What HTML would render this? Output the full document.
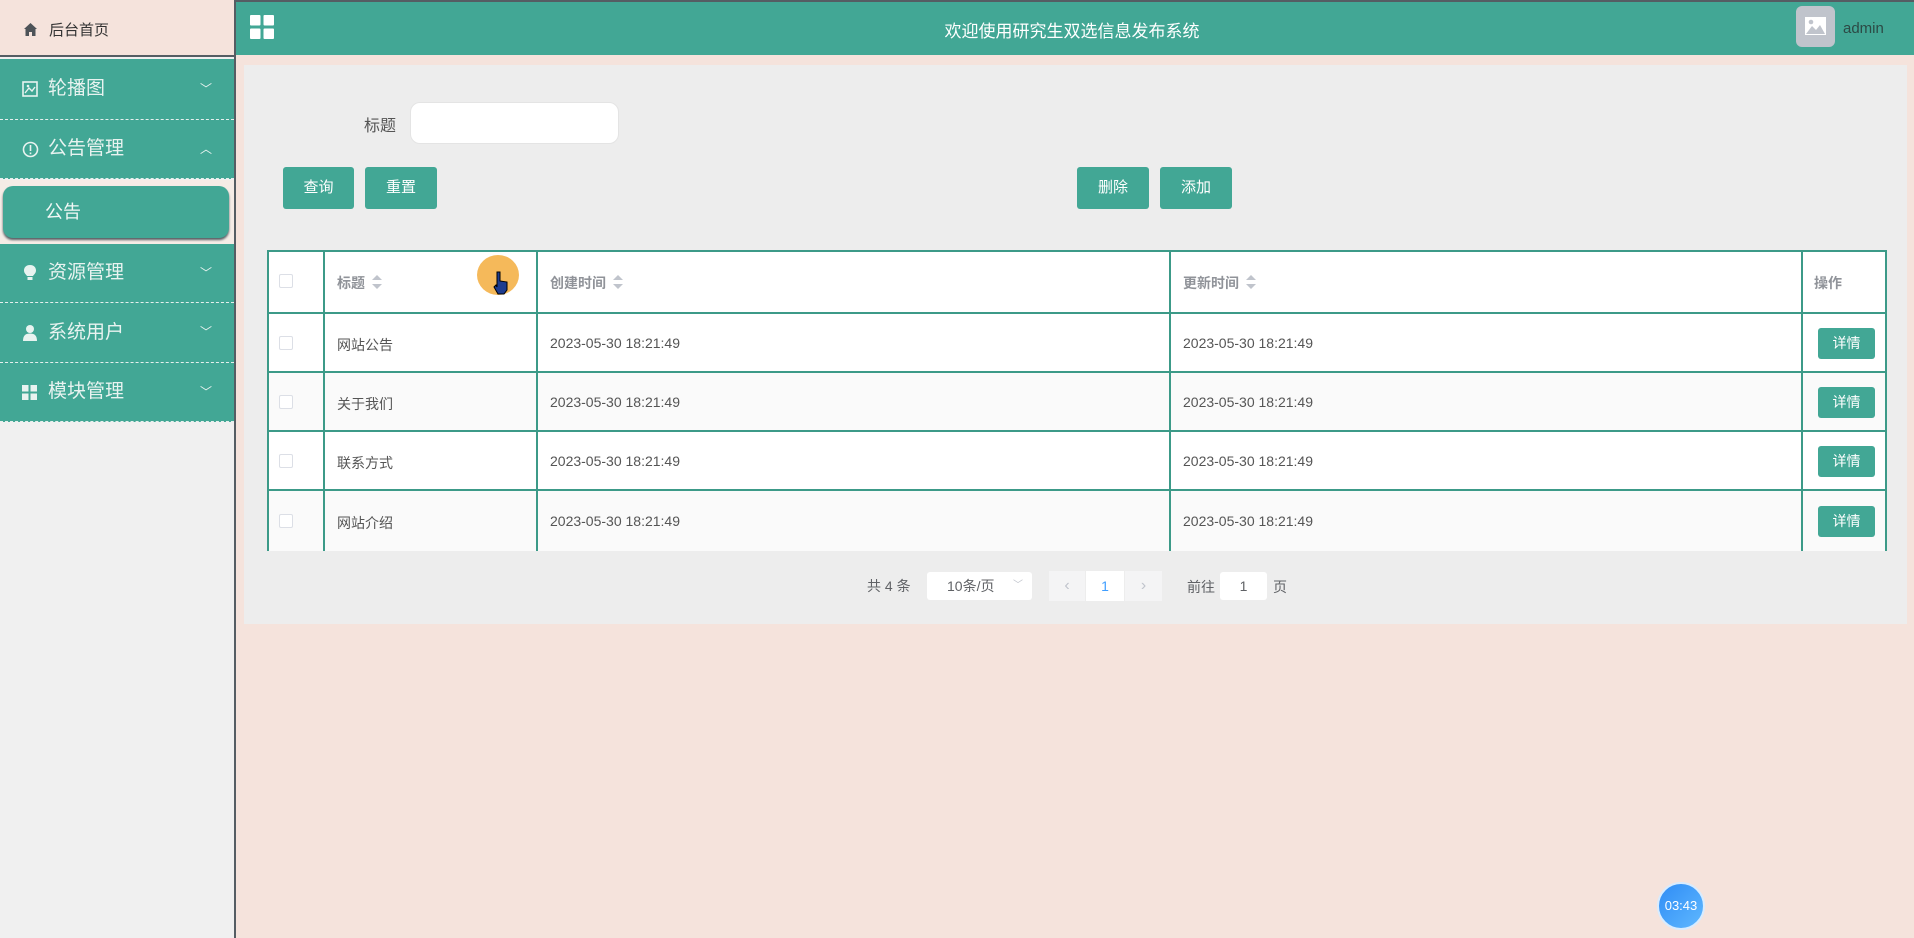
<!DOCTYPE html>
<html><head><meta charset="utf-8"><style>
*{margin:0;padding:0;box-sizing:border-box}
body{width:1914px;height:938px;background:#f5e3dc;font-family:"Liberation Sans","Noto Sans CJK SC",sans-serif;position:relative;overflow:hidden}
.a{position:absolute}
.side{left:0;top:0;width:236px;height:938px;background:#f0f0f0;border-right:2px solid #555d63}
.home{left:0;top:0;width:234px;height:57px;background:#f5e3dc;border-bottom:2px solid #555d63}
.mi{left:0;width:234px;background:#42a795;color:#e8f3f0;font-size:19px;border-bottom:1px dashed #e6f0ee}
.mi span.t{position:absolute;left:48px}
.mi .ic{position:absolute;left:22px}
.mi .ar{position:absolute;right:22px;font-size:12px}
.hdr{left:236px;top:0;width:1678px;height:55px;background:#42a795;border-top:2px solid #555d63}
.btn{background:#42a795;color:#fff;font-size:15px;text-align:center;border-radius:3px;height:42px;line-height:42px;top:167px}
.cb{position:absolute;left:12px;width:14px;height:14px;border:1px solid #dcdfe6;background:#fff;border-radius:2px}
.det{position:absolute;width:57px;height:31px;line-height:31px;text-align:center;background:#42a795;color:#fff;font-size:14px;border-radius:3px}
.th{position:absolute;top:23px;font-size:14px;color:#909399;font-weight:bold}
.sort{display:inline-block;vertical-align:middle;margin-left:7px;width:10px;height:16px;position:relative;top:-1px}
.sort:before{content:"";position:absolute;top:0;left:0;border:5px solid transparent;border-bottom-color:#c0c4cc;border-top-width:0}
.sort:after{content:"";position:absolute;bottom:2px;left:0;border:5px solid transparent;border-top-color:#c0c4cc;border-bottom-width:0}
.ln{position:absolute;background:#3c9a88}
</style></head><body>
<div class="a side"></div>
<div class="a home"><svg class="a" style="left:23px;top:22px" width="15" height="15" viewBox="0 0 15 15"><path d="M7.5 1 L14 7 L12.5 7 L12.5 14 L9 14 L9 10 L6 10 L6 14 L2.5 14 L2.5 7 L1 7Z" fill="#4d5358"/></svg><span class="a" style="left:49px;top:19px;font-size:15px;color:#333">后台首页</span></div>
<div class="a mi" style="top:59px;height:61px;line-height:60px"><svg class="ic" style="top:22px" width="16" height="16" viewBox="0 0 16 16"><rect x="1" y="1" width="14" height="14" fill="none" stroke="#e8f3f0" stroke-width="1.6"/><path d="M3 12 L7 7 L10 10 L13 6" fill="none" stroke="#e8f3f0" stroke-width="1.4"/><circle cx="6" cy="5" r="1.3" fill="#e8f3f0"/></svg><span class="t">轮播图</span><span class="ar">﹀</span></div>
<div class="a mi" style="top:120px;height:59px;line-height:58px"><svg class="ic" style="top:21px" width="17" height="17" viewBox="0 0 17 17"><circle cx="8.5" cy="8.5" r="7" fill="none" stroke="#e8f3f0" stroke-width="1.6"/><rect x="7.7" y="4" width="1.6" height="6" fill="#e8f3f0"/><rect x="7.7" y="11.5" width="1.6" height="1.7" fill="#e8f3f0"/></svg><span class="t">公告管理</span><span class="ar">︿</span></div>
<div class="a" style="left:0;top:180px;width:234px;height:64px;background:#f5ece6"></div>
<div class="a" style="left:3px;top:186px;width:226px;height:52px;background:#42a795;border-radius:10px;box-shadow:0 2px 2px #555d63;font-size:18px;line-height:52px;padding-left:42px;color:#f2f8f6">公告</div>
<div class="a mi" style="top:244px;height:59px;line-height:58px"><svg class="ic" style="top:20px" width="16" height="18" viewBox="0 0 16 18"><path d="M8 1 C3.5 1 2 4 2 6.5 C2 9 4 10.5 5 12 L11 12 C12 10.5 14 9 14 6.5 C14 4 12.5 1 8 1Z" fill="#e8f3f0"/><rect x="5.5" y="13" width="5" height="3" fill="#e8f3f0"/></svg><span class="t">资源管理</span><span class="ar">﹀</span></div>
<div class="a mi" style="top:303px;height:60px;line-height:59px"><svg class="ic" style="top:21px" width="16" height="17" viewBox="0 0 16 17"><circle cx="8" cy="5" r="4" fill="#e8f3f0"/><path d="M1 17 C1 11 4 9.5 8 9.5 C12 9.5 15 11 15 17Z" fill="#e8f3f0"/></svg><span class="t">系统用户</span><span class="ar">﹀</span></div>
<div class="a mi" style="top:363px;height:59px;line-height:58px"><svg class="ic" style="top:22px" width="15" height="15" viewBox="0 0 15 15"><rect x="0" y="0" width="6.5" height="6.5" fill="#e8f3f0"/><rect x="8.5" y="0" width="6.5" height="6.5" fill="#e8f3f0"/><rect x="0" y="8.5" width="6.5" height="6.5" fill="#e8f3f0"/><rect x="8.5" y="8.5" width="6.5" height="6.5" fill="#e8f3f0"/></svg><span class="t">模块管理</span><span class="ar">﹀</span></div>

<div class="a hdr"><svg class="a" style="left:14px;top:13px" width="24" height="24" viewBox="0 0 24 24"><rect x="0" y="0" width="10.5" height="10.5" rx="1" fill="#fff"/><rect x="13.5" y="0" width="10.5" height="10.5" rx="1" fill="#fff"/><rect x="0" y="13.5" width="10.5" height="10.5" rx="1" fill="#fff"/><rect x="13.5" y="13.5" width="10.5" height="10.5" rx="1" fill="#fff"/></svg>
<div class="a" style="left:0;width:1678px;top:15px;text-align:center;font-size:17px;color:#fff;padding-right:6px">欢迎使用研究生双选信息发布系统</div>
<div class="a" style="left:1560px;top:4px;width:39px;height:41px;background:#c0c4cc;border-radius:6px"><svg class="a" style="left:9px;top:11px" width="21" height="18" viewBox="0 0 21 18"><rect width="21" height="18" fill="#fff"/><path d="M1 17 L7 9 L11 13 L15 8 L20 17Z" fill="#c0c4cc"/><circle cx="6" cy="5" r="2.3" fill="#c0c4cc"/></svg></div>
<div class="a" style="left:1607px;top:18px;font-size:15px;color:#2c4a45">admin</div></div>

<div class="a" style="left:244px;top:65px;width:1663px;height:559px;background:#ededed"></div>
<div class="a" style="left:364px;top:112px;font-size:16px;color:#555">标题</div>
<div class="a" style="left:410px;top:102px;width:209px;height:42px;background:#fff;border:1px solid #e4e4e4;border-radius:10px"></div>
<div class="a btn" style="left:283px;width:71px">查询</div>
<div class="a btn" style="left:365px;width:72px">重置</div>
<div class="a btn" style="left:1077px;width:72px">删除</div>
<div class="a btn" style="left:1160px;width:72px">添加</div>

<div class="a" style="left:267px;top:250px;width:1620px;height:301px;overflow:hidden">
<div class="a" style="left:0;top:0;width:1620px;height:64px;background:#fff"></div>
<div class="a" style="left:0;top:64px;width:1620px;height:59px;background:#fff"></div>
<div class="a" style="left:0;top:123px;width:1620px;height:59px;background:#fafafa"></div>
<div class="a" style="left:0;top:182px;width:1620px;height:59px;background:#fff"></div>
<div class="a" style="left:0;top:241px;width:1620px;height:60px;background:#fafafa"></div>
<div class="ln" style="left:0;top:0;width:1620px;height:2px"></div>
<div class="ln" style="left:0;top:62px;width:1620px;height:2px"></div>
<div class="ln" style="left:0;top:121px;width:1620px;height:2px"></div>
<div class="ln" style="left:0;top:180px;width:1620px;height:2px"></div>
<div class="ln" style="left:0;top:239px;width:1620px;height:2px"></div>
<div class="ln" style="left:0;top:0;width:2px;height:301px"></div>
<div class="ln" style="left:56px;top:0;width:2px;height:301px"></div>
<div class="ln" style="left:269px;top:0;width:2px;height:301px"></div>
<div class="ln" style="left:902px;top:0;width:2px;height:301px"></div>
<div class="ln" style="left:1534px;top:0;width:2px;height:301px"></div>
<div class="ln" style="left:1618px;top:0;width:2px;height:301px"></div>

<div class="cb" style="top:24px"></div>
<div class="th" style="left:70px">标题<span class="sort"></span></div>
<div class="th" style="left:283px">创建时间<span class="sort"></span></div>
<div class="th" style="left:916px">更新时间<span class="sort"></span></div>
<div class="th" style="left:1547px">操作</div>

<div style="font-size:14px;color:#555">
<div class="cb" style="top:86px"></div><div class="a" style="left:70px;top:85px">网站公告</div><div class="a" style="left:283px;top:85px">2023-05-30 18:21:49</div><div class="a" style="left:916px;top:85px">2023-05-30 18:21:49</div><div class="det" style="left:1551px;top:78px">详情</div>
<div class="cb" style="top:145px"></div><div class="a" style="left:70px;top:144px">关于我们</div><div class="a" style="left:283px;top:144px">2023-05-30 18:21:49</div><div class="a" style="left:916px;top:144px">2023-05-30 18:21:49</div><div class="det" style="left:1551px;top:137px">详情</div>
<div class="cb" style="top:204px"></div><div class="a" style="left:70px;top:203px">联系方式</div><div class="a" style="left:283px;top:203px">2023-05-30 18:21:49</div><div class="a" style="left:916px;top:203px">2023-05-30 18:21:49</div><div class="det" style="left:1551px;top:196px">详情</div>
<div class="cb" style="top:264px"></div><div class="a" style="left:70px;top:263px">网站介绍</div><div class="a" style="left:283px;top:263px">2023-05-30 18:21:49</div><div class="a" style="left:916px;top:263px">2023-05-30 18:21:49</div><div class="det" style="left:1551px;top:256px">详情</div>
</div>
</div>

<div class="a" style="left:867px;top:576px;font-size:14px;color:#606266">共 4 条</div>
<div class="a" style="left:927px;top:572px;width:105px;height:28px;background:#fff;border-radius:3px;font-size:14px;color:#606266;line-height:28px;padding-left:20px">10条/页<span style="position:absolute;right:9px;color:#c0c4cc;font-size:10px">﹀</span></div>
<div class="a" style="left:1049px;top:571px;width:36px;height:30px;background:#f4f4f5;color:#c0c4cc;text-align:center;line-height:30px;font-size:16px">‹</div>
<div class="a" style="left:1086px;top:571px;width:38px;height:30px;background:#fff;color:#409eff;text-align:center;line-height:30px;font-size:14px">1</div>
<div class="a" style="left:1125px;top:571px;width:37px;height:30px;background:#f4f4f5;color:#c0c4cc;text-align:center;line-height:30px;font-size:16px">›</div>
<div class="a" style="left:1187px;top:577px;font-size:14px;color:#606266">前往</div>
<div class="a" style="left:1220px;top:572px;width:47px;height:28px;background:#fff;border-radius:3px;text-align:center;line-height:28px;font-size:14px;color:#606266">1</div>
<div class="a" style="left:1273px;top:577px;font-size:14px;color:#606266">页</div>

<div class="a" style="left:477px;top:255px;width:42px;height:40px;border-radius:50%;background:#f5b95a"></div>
<svg class="a" style="left:492px;top:270px" width="18" height="26" viewBox="0 0 18 26"><path d="M5 2 L8 2 L8 11 L15 12 L15 20 L12 24 L6 24 L2 17 L4 15 L5 17Z" fill="#1d3c8f" stroke="#000" stroke-width="1"/></svg>
<div class="a" style="left:1657px;top:882px;width:48px;height:48px;border-radius:50%;background:linear-gradient(135deg,#2f8cf5,#5fb8ff);border:2px solid #d8ecff;color:#fff;font-size:13px;text-align:center;line-height:44px">03:43</div>
</body></html>
